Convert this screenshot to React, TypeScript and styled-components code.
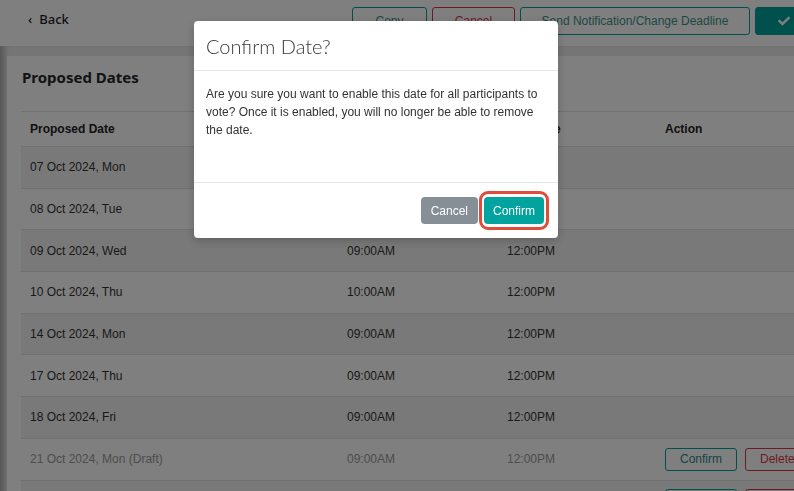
import React from "react";
import styled, { createGlobalStyle } from "styled-components";
import { FaCheck } from "react-icons/fa";

const teal = "#00a19b";
const red = "#dc3545";

const GlobalStyle = createGlobalStyle`
  html, body {
    margin: 0;
    padding: 0;
    overflow: hidden;
    background: #ffffff;
    font-family: "Liberation Sans", Arial, sans-serif;
  }
  * {
    box-sizing: border-box;
  }
`;

const Page = styled.div`
  position: relative;
  width: 830px;
  min-height: 491px;
  background: #ebebeb;
`;

const TopBar = styled.header`
  display: flex;
  align-items: flex-start;
  height: 46px;
  padding: 7px 17px 0 28px;
  background: #ffffff;
`;

const BackLink = styled.a`
  display: flex;
  align-items: center;
  gap: 7px;
  line-height: 24px;
  font-family: "Noto Sans", sans-serif;
  font-size: 13px;
  font-weight: 500;
  color: #1f1f1f;
  text-decoration: none;
  cursor: pointer;
`;

const Actions = styled.div`
  display: flex;
  gap: 5px;
  margin-left: auto;
`;

const ToolButton = styled.button<{ $tone: "teal" | "red" | "solid"; $width: number }>`
  height: 28px;
  width: ${({ $width }) => $width}px;
  padding: 0 10px;
  border-radius: 3px;
  font-family: "Liberation Sans", Arial, sans-serif;
  font-size: 12px;
  display: flex;
  align-items: center;
  justify-content: center;
  cursor: pointer;
  border: 1px solid ${({ $tone }) => ($tone === "red" ? red : teal)};
  background: ${({ $tone }) => ($tone === "solid" ? teal : "#ffffff")};
  color: ${({ $tone }) => ($tone === "red" ? red : $tone === "solid" ? "#ffffff" : "#3a8f8b")};
`;

const Content = styled.main`
  display: flex;
  padding: 10px 0 0 7px;
  box-shadow: inset 8px 0 6px -4px rgba(0, 0, 0, 0.28);
`;

const Card = styled.section`
  flex: 1;
  background: #ffffff;
  padding: 11px 0 0 14px;
  min-height: 435px;
`;

const Title = styled.h2`
  margin: 0 0 24px 1px;
  font-family: "Noto Sans", sans-serif;
  font-size: 15px;
  line-height: 20px;
  font-weight: 700;
  color: #262626;
`;

const Row = styled.div<{ $head?: boolean; $striped?: boolean; $draft?: boolean }>`
  display: grid;
  grid-template-columns: 317px 160px 158px 1fr;
  align-items: center;
  height: ${({ $head }) => ($head ? 35 : 41.7)}px;
  border-top: 1px solid #dee2e6;
  background: ${({ $striped }) => ($striped ? "#f2f2f2" : "#ffffff")};
  font-size: 12px;
  font-weight: ${({ $head }) => ($head ? 700 : 400)};
  color: ${({ $head, $draft }) => ($draft ? "#9a9a9a" : $head ? "#222222" : "#333333")};
`;

const Cell = styled.div`
  display: flex;
  align-items: center;
  gap: 8px;
  padding-left: 9px;
  white-space: nowrap;
`;

const RowButton = styled.button<{ $tone: "teal" | "red" }>`
  height: 23px;
  padding: 0 14px;
  border-radius: 3px;
  background: #ffffff;
  font-family: "Liberation Sans", Arial, sans-serif;
  font-size: 12px;
  cursor: pointer;
  border: 1px solid ${({ $tone }) => ($tone === "red" ? red : teal)};
  color: ${({ $tone }) => ($tone === "red" ? red : "#1f8a85")};
`;

const Overlay = styled.div`
  position: fixed;
  inset: 0;
  background: rgba(0, 0, 0, 0.5);
`;

const Modal = styled.div`
  position: fixed;
  top: 21px;
  left: 194px;
  width: 364px;
  background: #ffffff;
  border-radius: 4px;
  box-shadow: 0 3px 9px rgba(0, 0, 0, 0.2);
`;

const ModalHeader = styled.div`
  padding: 13px 12px 11px;
  border-bottom: 1px solid #e5e5e5;
`;

const ModalTitle = styled.h3`
  margin: 0;
  font-family: "Lato", sans-serif;
  font-size: 20px;
  line-height: 25px;
  font-weight: 300;
  color: #3a3a3a;
`;

const ModalBody = styled.div`
  min-height: 111px;
  padding: 14px 12px 12px;
  font-size: 12px;
  line-height: 18px;
  color: #333333;
`;

const ModalFooter = styled.div`
  display: flex;
  justify-content: flex-end;
  gap: 6px;
  padding: 14px 14px 14px;
  border-top: 1px solid #e5e5e5;
`;

const ModalButton = styled.button<{ $primary?: boolean }>`
  height: 27px;
  padding: 0 ${({ $primary }) => ($primary ? 9 : 10)}px;
  border: 0;
  border-radius: 4px;
  font-family: "Liberation Sans", Arial, sans-serif;
  font-size: 12px;
  color: #ffffff;
  background: ${({ $primary }) => ($primary ? "#00a39e" : "#868e96")};
  cursor: pointer;
`;

const Highlight = styled.span`
  position: relative;
  display: inline-flex;

  &::after {
    content: "";
    position: absolute;
    inset: -6px -5px -6px -5px;
    border: 3px solid #e04b3a;
    border-radius: 9px;
    pointer-events: none;
  }
`;

type DateRow = {
  date: string;
  start: string;
  end: string;
  draft?: boolean;
};

const rows: DateRow[] = [
  { date: "07 Oct 2024, Mon", start: "09:00AM", end: "12:00PM" },
  { date: "08 Oct 2024, Tue", start: "09:00AM", end: "12:00PM" },
  { date: "09 Oct 2024, Wed", start: "09:00AM", end: "12:00PM" },
  { date: "10 Oct 2024, Thu", start: "10:00AM", end: "12:00PM" },
  { date: "14 Oct 2024, Mon", start: "09:00AM", end: "12:00PM" },
  { date: "17 Oct 2024, Thu", start: "09:00AM", end: "12:00PM" },
  { date: "18 Oct 2024, Fri", start: "09:00AM", end: "12:00PM" },
  { date: "21 Oct 2024, Mon (Draft)", start: "09:00AM", end: "12:00PM", draft: true },
  { date: "28 Oct 2024, Mon (Draft)", start: "09:00AM", end: "12:00PM", draft: true },
];

const App: React.FC = () => {
  return (
    <>
      <GlobalStyle />
      <Page>
        <TopBar>
          <BackLink>
            <span>‹</span>
            <span>Back</span>
          </BackLink>
          <Actions>
            <ToolButton $tone="teal" $width={75}>Copy</ToolButton>
            <ToolButton $tone="red" $width={83}>Cancel</ToolButton>
            <ToolButton $tone="teal" $width={230}>Send Notification/Change Deadline</ToolButton>
            <ToolButton $tone="solid" $width={58}>
              <FaCheck size={12} />
            </ToolButton>
          </Actions>
        </TopBar>
        <Content>
          <Card>
            <Title>Proposed Dates</Title>
            <Row $head>
              <Cell>Proposed Date</Cell>
              <Cell>Start Time</Cell>
              <Cell>End Time</Cell>
              <Cell>Action</Cell>
            </Row>
            {rows.map((row, i) => (
              <Row key={row.date} $striped={i % 2 === 0} $draft={row.draft}>
                <Cell>{row.date}</Cell>
                <Cell>{row.start}</Cell>
                <Cell>{row.end}</Cell>
                <Cell>
                  {row.draft && (
                    <>
                      <RowButton $tone="teal">Confirm</RowButton>
                      <RowButton $tone="red">Delete</RowButton>
                    </>
                  )}
                </Cell>
              </Row>
            ))}
          </Card>
        </Content>
      </Page>
      <Overlay />
      <Modal>
        <ModalHeader>
          <ModalTitle>Confirm Date?</ModalTitle>
        </ModalHeader>
        <ModalBody>
          Are you sure you want to enable this date for all participants to vote? Once it is
          enabled, you will no longer be able to remove the date.
        </ModalBody>
        <ModalFooter>
          <ModalButton>Cancel</ModalButton>
          <Highlight>
            <ModalButton $primary>Confirm</ModalButton>
          </Highlight>
        </ModalFooter>
      </Modal>
    </>
  );
};

export default App;
